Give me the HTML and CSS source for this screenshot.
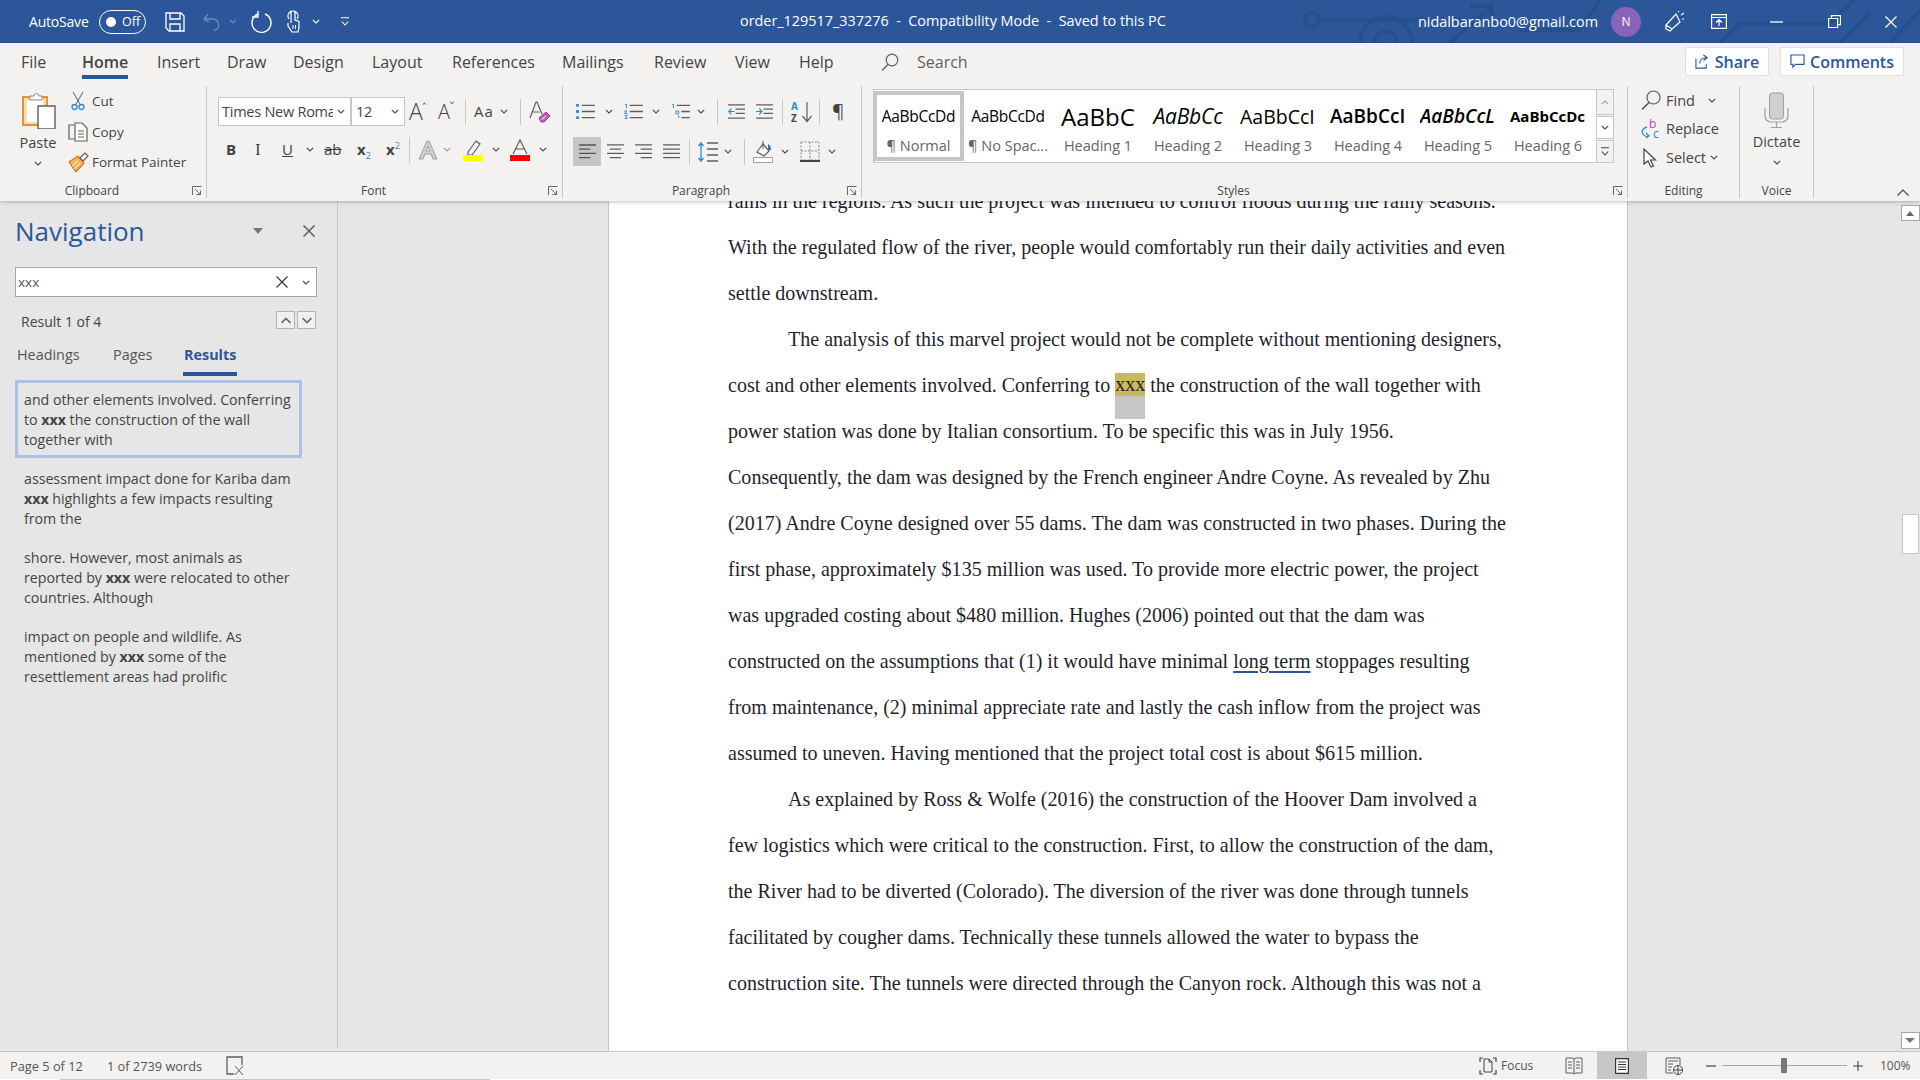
FILE: index.html
```html
<!DOCTYPE html>
<html lang="en">
<head>
<meta charset="utf-8">
<title>order_129517_337276 - Word</title>
<link rel="stylesheet" href="styles.css">
</head>
<body>
<svg class="defs" aria-hidden="true">
  <symbol id="chev" viewBox="0 0 8 5"><path d="M.8.8 4 4l3.2-3.2" fill="none" stroke="currentColor" stroke-width="1.1"/></symbol>
  <symbol id="launch" viewBox="0 0 10 10"><path d="M.5 9V.5H9.500M3 3l5.500 5.500M4.500 8.500H8.500V4.500" fill="none" stroke="#666"/></symbol>
</svg>
<div class="app">
  <header class="titlebar">
    <svg class="circuit" viewBox="0 0 640 43" aria-hidden="true"><g fill="none" stroke="#25508f" stroke-width="4"><circle cx="12" cy="20" r="7"/><path d="M19 20H130M60 43a26 26 0 0 1 52 0M150 43 190 8M170 6h22v22M220 30h60L300 0M420 43l20-20h90l24-23M540 43l30-30M590 43 630 0"/><circle cx="86" cy="42" r="11"/></g></svg>
    <div class="qat">
      <span class="autosave">AutoSave</span>
      <span class="toggle"><i class="dot"></i><span>Off</span></span>
      <svg class="q-save" viewBox="0 0 20 20"><path d="M1 1h15l3 3v15H4l-3-3zM5 1v6h10V1M5 19v-7h10v7" fill="none" stroke="#fff" stroke-width="1.300"/></svg>
      <svg class="q-undo" viewBox="0 0 18 20"><path d="M5 2 1 7l5 3M1.500 7H10a6 6 0 0 1 5 9l-4 3" fill="none" stroke="#6c8cbd" stroke-width="1.300"/></svg>
      <svg class="chev q-c1 dim"><use href="#chev"/></svg>
      <svg class="q-redo" viewBox="0 0 21 22"><path d="M7 3a9.500 9.500 0 1 0 7 0M7 0v6H1" fill="none" stroke="#fff" stroke-width="1.400"/></svg>
      <svg class="q-touch" viewBox="0 0 15 23"><path d="M5 13V3a2 2 0 0 1 4 0v7l4 1.500V18l-1 4H6l-4-6V13M3 9a5 5 0 1 1 8 0" fill="none" stroke="#fff" stroke-width="1.200"/><path d="M7 15v4M9.500 15v4" stroke="#fff"/></svg>
      <svg class="chev q-c2"><use href="#chev"/></svg>
      <svg class="q-more" viewBox="0 0 8 10"><path d="M0 .8h8M.8 4.500 4 8l3.200-3.500" fill="none" stroke="#fff" stroke-width="1.100"/></svg>
    </div>
    <div class="doc-title">order_129517_337276&nbsp; - &nbsp;Compatibility Mode&nbsp; - &nbsp;Saved to this PC</div>
    <div class="account">
      <span class="email">nidalbaranbo0@gmail.com</span>
      <span class="avatar">N</span>
      <svg class="w-feedback" viewBox="0 0 19 22"><path d="M1 14 11 3l4 8-8 7zM1 14l-0 4 4 2 2-2M13 1l1-1M16 4l3-2M17 8h2" fill="none" stroke="#fff" stroke-width="1.200"/></svg>
      <svg class="w-display" viewBox="0 0 16 15"><path d="M.6.6h14.800v13.800H.6zM.6 3.500h14.800M8 12V6M5 8.500 8 5.500l3 3" fill="none" stroke="#fff" stroke-width="1.200"/></svg>
      <svg class="w-min" viewBox="0 0 13 2"><path d="M0 1h13" stroke="#fff" stroke-width="1.300"/></svg>
      <svg class="w-max" viewBox="0 0 13 13"><path d="M.6 3.500h9v9h-9zM3.500 3.500V.6h9v9h-3" fill="none" stroke="#fff" stroke-width="1.200"/></svg>
      <svg class="w-close" viewBox="0 0 12 12"><path d="m.5.5 11 11M11.500.5l-11 11" stroke="#fff" stroke-width="1.200"/></svg>
    </div>
  </header>

  <section class="ribbon">
    <div class="tabrow">
      <nav class="tabs">
        <span>File</span><span class="active">Home</span><span>Insert</span><span>Draw</span><span>Design</span><span>Layout</span><span>References</span><span>Mailings</span><span>Review</span><span>View</span><span>Help</span>
        <svg class="tab-search" viewBox="0 0 18 18"><circle cx="11" cy="7" r="5.800" fill="none" stroke="#605e5c" stroke-width="1.200"/><path d="m7 11.500-6 6" stroke="#605e5c" stroke-width="1.200"/></svg>
        <span class="search-word">Search</span>
      </nav>
      <div class="share-row">
        <button class="pill share"><svg viewBox="0 0 16 16"><path d="M1 5v10h11v-4M5 10c0-4 3-6 7-6M9 1l4 3-4 3" fill="none" stroke="#2b579a" stroke-width="1.200"/></svg>Share</button>
        <button class="pill comments"><svg viewBox="0 0 16 16"><path d="M1 1h14v10H6l-3 3v-3H1z" fill="none" stroke="#2b579a" stroke-width="1.200"/></svg>Comments</button>
      </div>
    </div>
    <div class="groups">
      <div class="grp g-clip">
        <div class="grp-body clip-body">
          <div class="paste">
            <svg class="paste-ico" viewBox="0 0 35 37"><path d="M2 5h24v28H2z" fill="#fbe3c0" stroke="#e8903a" stroke-width="2"/><path d="M5 7.500h18V31H5z" fill="#fff" stroke="#f3c78e"/><path d="M9 7V4h4a2.500 2.500 0 0 1 5 0h3v4H9z" fill="#fff" stroke="#8a8886"/><path d="M17 14h17v23H17z" fill="#fff" stroke="#605e5c" stroke-width="1.400"/></svg>
            <span class="big-label">Paste</span>
            <svg class="chev"><use href="#chev"/></svg>
          </div>
          <div class="clip-list">
            <div class="clip-row"><svg class="ico-cut" viewBox="0 0 14 20"><path d="M2 1l7 12M12 1 5 13" fill="none" stroke="#605e5c"/><circle cx="3.500" cy="16" r="2.500" fill="none" stroke="#2b88d8" stroke-width="1.300"/><circle cx="10.500" cy="16" r="2.500" fill="none" stroke="#2b88d8" stroke-width="1.300"/></svg><span>Cut</span></div>
            <div class="clip-row"><svg class="ico-copy" viewBox="0 0 20 20"><path d="M6 3H1v14h5" fill="none" stroke="#605e5c" stroke-width="1.200"/><path d="M7 1h7l5 5v13H7z" fill="#fff" stroke="#605e5c" stroke-width="1.200"/><path d="M10 9h6M10 12h6M10 15h6" stroke="#605e5c"/></svg><span>Copy</span></div>
            <div class="clip-row"><svg class="ico-fp" viewBox="0 0 21 20"><path d="M1 10 10 4l6 7-8 9z" fill="#f7b45c" stroke="#d8741a" stroke-width="1.200"/><path d="M4 14l6-5M6 17l6-6" stroke="#fff"/><path d="M12 6 17 1l3 3-5 5z" fill="#fff" stroke="#605e5c" stroke-width="1.200"/></svg><span>Format Painter</span></div>
          </div>
        </div>
        <div class="grp-label"><span>Clipboard</span><svg class="launcher"><use href="#launch"/></svg></div>
      </div>

      <div class="grp g-font">
        <div class="grp-body two-rows">
          <div class="row font-r1">
            <div class="combo"><span class="clip-txt">Times New Roma</span><svg class="chev"><use href="#chev"/></svg></div>
            <div class="combo"><span class="clip-txt">12</span><svg class="chev"><use href="#chev"/></svg></div>
            <span class="glyph big-a">A<sup>ˆ</sup></span>
            <span class="glyph mid-a">A<sup class="blue">ˇ</sup></span>
            <i class="sep"></i>
            <span class="glyph aa">Aa</span>
            <svg class="chev"><use href="#chev"/></svg>
            <i class="sep"></i>
            <svg class="ico-clear" viewBox="0 0 21 22"><path d="M1 17 7 1h1l5 12M3.500 11h7" fill="none" stroke="#605e5c" stroke-width="1.200"/><path d="m10 17 7-6 4 4-6 6h-3z" fill="#c45fc4" stroke="#8f3b9c"/><path d="m12.500 19 4-4" stroke="#fff"/></svg>
          </div>
          <div class="row font-r2">
            <b class="fmt">B</b><i class="fmt serif">I</i><u class="fmt">U</u>
            <svg class="chev"><use href="#chev"/></svg>
            <s class="fmt">ab</s>
            <b class="fmt">x<sub class="blue">2</sub></b>
            <b class="fmt">x<sup class="blue">2</sup></b>
            <i class="sep"></i>
            <svg class="ico-effect" viewBox="0 0 20 20"><path d="M1 19 9 1h2l8 18h-4l-2-5H7l-2 5zM8 11h4l-2-5z" fill="#d2d0ce" stroke="#a19f9d"/></svg>
            <svg class="chev dimc"><use href="#chev"/></svg>
            <svg class="ico-hl" viewBox="0 0 20 22"><path d="m5 13 8-11 4 3-8 11H5z" fill="none" stroke="#605e5c" stroke-width="1.200"/><path d="M0 16h20v6H0z" fill="#ffff00"/></svg>
            <svg class="chev"><use href="#chev"/></svg>
            <svg class="ico-fc" viewBox="0 0 20 22"><path d="M3 15 10 1l7 14M5.500 10h9" fill="none" stroke="#605e5c" stroke-width="1.200"/><path d="M0 16h20v6H0z" fill="#ff0000"/></svg>
            <svg class="chev"><use href="#chev"/></svg>
          </div>
        </div>
        <div class="grp-label"><span>Font</span><svg class="launcher"><use href="#launch"/></svg></div>
      </div>

      <div class="grp g-para">
        <div class="grp-body two-rows">
          <div class="row para-r1">
            <svg class="ico-list" viewBox="0 0 20 16"><path d="M0 0h3v3H0zM0 6.500h3v3H0zM0 13h3v3H0z" fill="#2b88d8"/><path d="M6 1.500h14M6 8h14M6 14.500h14" stroke="#605e5c" stroke-width="1.400"/></svg>
            <svg class="chev"><use href="#chev"/></svg>
            <svg class="ico-list" viewBox="0 0 20 16"><path d="M1 .5h1.500v4M0 7.500h3L.5 10h3M.5 12h3l-2 1.500 2 2h-3" fill="none" stroke="#2b88d8"/><path d="M6 1.500h14M6 8h14M6 14.500h14" stroke="#605e5c" stroke-width="1.400"/></svg>
            <svg class="chev"><use href="#chev"/></svg>
            <svg class="ico-list" viewBox="0 0 20 16"><path d="M1 .5h1.500v4M5 7.500h3v3H5zM8 12v3" fill="none" stroke="#2b88d8"/><path d="M6 1.500h14M11 8h9M11 14.500h9" stroke="#605e5c" stroke-width="1.400"/></svg>
            <svg class="chev"><use href="#chev"/></svg>
            <i class="sep"></i>
            <svg class="ico-list" viewBox="0 0 18 16"><path d="M0 1h18M8 5.500h10M8 10h10M0 15h18" stroke="#605e5c" stroke-width="1.400"/><path d="M7 8H1M3.500 5 .8 8l2.700 3" fill="none" stroke="#2b88d8" stroke-width="1.300"/></svg>
            <svg class="ico-list" viewBox="0 0 18 16"><path d="M0 1h18M8 5.500h10M8 10h10M0 15h18" stroke="#605e5c" stroke-width="1.400"/><path d="M0 8h6M3.500 5l2.700 3-2.700 3" fill="none" stroke="#2b88d8" stroke-width="1.300"/></svg>
            <i class="sep"></i>
            <svg class="ico-sort" viewBox="0 0 21 22"><text x="0" y="9" class="sort-a">A</text><text x="0" y="21" class="sort-z">Z</text><path d="M16 1v19M11.500 15l4.500 5.500 4.500-5.500" fill="none" stroke="#605e5c" stroke-width="1.200"/></svg>
            <i class="sep"></i>
            <span class="pilcrow">¶</span>
          </div>
          <div class="row para-r2">
            <span class="al-sel"><svg class="ico-list" viewBox="0 0 20 16"><path d="M1 1h18M1 5.500h12M1 10h18M1 14.500h12" stroke="#555" stroke-width="1.500"/></svg></span>
            <svg class="ico-list" viewBox="0 0 20 16"><path d="M1 1h18M4 5.500h12M1 10h18M4 14.500h12" stroke="#605e5c" stroke-width="1.400"/></svg>
            <svg class="ico-list" viewBox="0 0 20 16"><path d="M1 1h18M7 5.500h12M1 10h18M7 14.500h12" stroke="#605e5c" stroke-width="1.400"/></svg>
            <svg class="ico-list" viewBox="0 0 20 16"><path d="M1 1h18M1 5.500h18M1 10h18M1 14.500h18" stroke="#605e5c" stroke-width="1.400"/></svg>
            <i class="sep"></i>
            <svg class="ico-lsp" viewBox="0 0 20 22"><path d="M3 2v18M.5 5 3 2l2.500 3M.5 17 3 20l2.500-3" fill="none" stroke="#2b88d8" stroke-width="1.300"/><path d="M9 2h11M9 8h11M9 14h11M9 20h11" stroke="#605e5c" stroke-width="1.400"/></svg>
            <svg class="chev"><use href="#chev"/></svg>
            <i class="sep"></i>
            <svg class="ico-shade" viewBox="0 0 20 23"><path d="m4 12 6-8 6 7-5 5z" fill="#fff" stroke="#605e5c" stroke-width="1.200"/><path d="M10 1v8" stroke="#605e5c"/><path d="M15 4c2 1 3 3 3 6h-3z" fill="#2b6fb8"/><path d="M.5 17.500h19v5H.5z" fill="#fff" stroke="#a19f9d"/></svg>
            <svg class="chev"><use href="#chev"/></svg>
            <svg class="ico-bord" viewBox="0 0 20 22"><path d="M1 1h18v18H1zM10 1v18M1 10h18" fill="none" stroke="#8a8886" stroke-dasharray="2 1.500"/><path d="M0 20h20" stroke="#444" stroke-width="2"/></svg>
            <svg class="chev"><use href="#chev"/></svg>
          </div>
        </div>
        <div class="grp-label"><span>Paragraph</span><svg class="launcher"><use href="#launch"/></svg></div>
      </div>

      <div class="grp g-styles">
        <div class="grp-body styles-body">
          <div class="gallery">
            <div class="style selected"><span class="pv pv-n">AaBbCcDd</span><span class="sl">¶ Normal</span></div>
            <div class="style"><span class="pv pv-n">AaBbCcDd</span><span class="sl">¶ No Spac...</span></div>
            <div class="style"><span class="pv pv-1">AaBbC</span><span class="sl">Heading 1</span></div>
            <div class="style"><span class="pv pv-2">AaBbCc</span><span class="sl">Heading 2</span></div>
            <div class="style"><span class="pv pv-3">AaBbCcI</span><span class="sl">Heading 3</span></div>
            <div class="style"><span class="pv pv-4">AaBbCcI</span><span class="sl">Heading 4</span></div>
            <div class="style"><span class="pv pv-5">AaBbCcL</span><span class="sl">Heading 5</span></div>
            <div class="style"><span class="pv pv-6">AaBbCcDc</span><span class="sl">Heading 6</span></div>
          </div>
          <div class="gal-scroll">
            <span class="gs gs-up"><svg class="chev flip dimc"><use href="#chev"/></svg></span>
            <span class="gs gs-dn"><svg class="chev"><use href="#chev"/></svg></span>
            <span class="gs gs-more"><svg class="more-ico" viewBox="0 0 8 10"><path d="M0 .8h8M.8 4.500 4 8l3.200-3.500" fill="none" stroke="#444" stroke-width="1.100"/></svg></span>
          </div>
        </div>
        <div class="grp-label"><span>Styles</span><svg class="launcher"><use href="#launch"/></svg></div>
      </div>

      <div class="grp g-edit">
        <div class="grp-body edit-body">
          <div class="edit-row"><svg class="ed-ico" viewBox="0 0 20 20"><circle cx="12.500" cy="7.500" r="6.500" fill="none" stroke="#605e5c" stroke-width="1.200"/><path d="m8 12.500-7 7" stroke="#444" stroke-width="1.300"/></svg><span>Find</span><svg class="chev"><use href="#chev"/></svg></div>
          <div class="edit-row"><svg class="ed-ico" viewBox="0 0 20 20"><text x="8" y="9" class="rep-b">b</text><text x="12" y="19" class="rep-c">c</text><path d="M6 8C2 9 0 12 2 15s4 3 6 2M5 14l3 3-3 2" fill="none" stroke="#2b88d8" stroke-width="1.300"/></svg><span>Replace</span></div>
          <div class="edit-row"><svg class="ed-ico" viewBox="0 0 20 20"><path d="M3 1v15l4-3 3 6 2.500-1-3-6h5z" fill="#fff" stroke="#444" stroke-width="1.200"/></svg><span class="sel-w">Select</span><svg class="chev"><use href="#chev"/></svg></div>
        </div>
        <div class="grp-label nolaunch"><span>Editing</span></div>
      </div>

      <div class="grp g-voice">
        <div class="grp-body voice-body">
          <svg class="mic" viewBox="0 0 25 36"><rect x="5.500" y="1" width="14" height="26" rx="3" fill="#d2d0ce" stroke="#a19f9d"/><path d="M1 16v8a6 6 0 0 0 6 6h11a6 6 0 0 0 6-6v-8M12.500 30v5M7 35.500h11" fill="none" stroke="#a19f9d" stroke-width="1.200"/></svg>
          <span class="big-label">Dictate</span>
          <svg class="chev"><use href="#chev"/></svg>
        </div>
        <div class="grp-label nolaunch"><span>Voice</span></div>
      </div>
      <svg class="collapse" viewBox="0 0 12 7"><path d="M.5 6.500 6 1l5.500 5.500" fill="none" stroke="#444" stroke-width="1.200"/></svg>
    </div>
  </section>

  <main class="workspace">
    <aside class="nav">
      <div class="nav-head"><h1>Navigation</h1><i class="tri"></i><svg class="nav-x" viewBox="0 0 12 12"><path d="m.5.500 11 11M11.500.500l-11 11" stroke="#605e5c" stroke-width="1.500"/></svg></div>
      <div class="nav-search"><span>xxx</span><svg class="ns-x" viewBox="0 0 12 12"><path d="m.5.500 11 11M11.500.500l-11 11" stroke="#333" stroke-width="1.100"/></svg><svg class="chev"><use href="#chev"/></svg></div>
      <div class="nav-result"><span>Result 1 of 4</span><span class="arrows"><i class="arrow"><svg class="chev flip wide"><use href="#chev"/></svg></i><i class="arrow"><svg class="chev wide"><use href="#chev"/></svg></i></span></div>
      <div class="nav-tabs"><span class="t1">Headings</span><span class="t2">Pages</span><span class="t3 on">Results</span></div>
      <ul class="results">
        <li class="hit-card"><span>and other elements involved. Conferring</span><span>to <b>xxx</b> the construction of the wall</span><span>together with</span></li>
        <li><span>assessment impact done for Kariba dam</span><span><b>xxx</b> highlights a few impacts resulting</span><span>from the</span></li>
        <li><span>shore. However, most animals as</span><span>reported by <b>xxx</b> were relocated to other</span><span>countries. Although</span></li>
        <li><span>impact on people and wildlife. As</span><span>mentioned by <b>xxx</b> some of the</span><span>resettlement areas had prolific</span></li>
      </ul>
    </aside>
    <div class="canvas">
      <article class="page">
        <p>rains in the regions. As such the project was intended to control floods during the rainy seasons.</p>
        <p>With the regulated flow of the river, people would comfortably run their daily activities and even</p>
        <p>settle downstream.</p>
        <p class="ind">The analysis of this marvel project would not be complete without mentioning designers,</p>
        <p>cost and other elements involved. Conferring to <span class="hit">xxx</span> the construction of the wall together with</p>
        <p>power station was done by Italian consortium. To be specific this was in July 1956.</p>
        <p>Consequently, the dam was designed by the French engineer Andre Coyne. As revealed by Zhu</p>
        <p>(2017) Andre Coyne designed over 55 dams. The dam was constructed in two phases. During the</p>
        <p>first phase, approximately $135 million was used. To provide more electric power, the project</p>
        <p>was upgraded costing about $480 million. Hughes (2006) pointed out that the dam was</p>
        <p>constructed on the assumptions that (1) it would have minimal <span class="gram">long term</span> stoppages resulting</p>
        <p>from maintenance, (2) minimal appreciate rate and lastly the cash inflow from the project was</p>
        <p>assumed to uneven. Having mentioned that the project total cost is about $615 million.</p>
        <p class="ind">As explained by Ross &amp; Wolfe (2016) the construction of the Hoover Dam involved a</p>
        <p>few logistics which were critical to the construction. First, to allow the construction of the dam,</p>
        <p>the River had to be diverted (Colorado). The diversion of the river was done through tunnels</p>
        <p>facilitated by cougher dams. Technically these tunnels allowed the water to bypass the</p>
        <p>construction site. The tunnels were directed through the Canyon rock. Although this was not a</p>
      </article>
      <div class="vscroll">
        <span class="sb-btn"><i class="up"></i></span>
        <span class="thumb"></span>
        <span class="sb-btn end"><i class="dn"></i></span>
      </div>
    </div>
  </main>

  <footer class="status">
    <div class="st-left">
      <span>Page 5 of 12</span><span>1 of 2739 words</span>
      <svg class="st-proof" viewBox="0 0 18 20"><path d="M9 1H1v17h7M9 1h7v8" fill="none" stroke="#605e5c" stroke-width="1.300"/><path d="m9 10 8 9M17 10l-8 9" stroke="#605e5c"/></svg>
    </div>
    <div class="st-right">
      <svg class="st-focus" viewBox="0 0 18 18"><path d="M1 5V1h3M14 1h3v4M1 13v4h3M14 17h3v-4" fill="none" stroke="#444" stroke-width="1.200"/><path d="M5 2h5l3 3v10H5zM10 2v3h3" fill="none" stroke="#444"/></svg>
      <span class="st-fword">Focus</span>
      <svg class="st-read" viewBox="0 0 18 18"><path d="M1 1h6l2 1 2-1h6v15h-6l-2 1-2-1H1zM9 2v15M3 5h4M3 8h4M3 11h4M11 5h4M11 8h4M11 11h4" fill="none" stroke="#605e5c"/></svg>
      <span class="st-print"><svg viewBox="0 0 14 16"><path d="M.6.6h12.800v14.800H.6z" fill="#fff" stroke="#333" stroke-width="1.200"/><path d="M3 4h8M3 6.500h8M3 9h8M3 11.500h8" stroke="#333"/></svg></span>
      <svg class="st-web" viewBox="0 0 18 18"><path d="M8 16H1V1h14v7M3 4h10M3 7h5M3 10h4M3 13h3" fill="none" stroke="#605e5c"/><circle cx="13" cy="13" r="4.500" fill="#f3f2f1" stroke="#444"/><path d="M8.500 13h9M13 8.500v9" stroke="#444"/></svg>
      <svg class="st-minus" viewBox="0 0 10 2"><path d="M0 1h10" stroke="#444" stroke-width="1.200"/></svg>
      <span class="slider"><i></i></span>
      <svg class="st-plus" viewBox="0 0 10 10"><path d="M0 5h10M5 0v10" stroke="#444" stroke-width="1.100"/></svg>
      <span class="st-zoom">100%</span>
    </div>
  </footer>
  <div class="strip"><i></i></div>
</div>
</body>
</html>
```

FILE: styles.css
```css
* { box-sizing: border-box; }
html, body { margin: 0; height: 100%; overflow: hidden; }
body { font-family: "Open Sans", "Noto Sans", sans-serif; color: #444; }
.defs { display: none; }
svg { display: block; flex: none; }
i { font-style: normal; }
.app { width: 1920px; height: 1080px; display: flex; flex-direction: column; overflow: hidden; background: #f3f2f1; }

/* title bar */
.titlebar { height: 43px; flex: none; background: #2b579a; color: #fff; display: flex; align-items: center; position: relative; padding-left: 29px; padding-right: 23px; font-size: 14.400px; }
.circuit { position: absolute; left: 1300px; top: 0; width: 640px; height: 43px; }
.qat, .account { display: flex; align-items: center; position: relative; }
.autosave { width: 70px; font-size: 14px; letter-spacing: -.2px; }
.toggle { width: 47px; height: 24px; border: 1px solid #fff; border-radius: 12px; display: flex; align-items: center; gap: 6px; padding-left: 6px; font-size: 12.500px; }
.dot { width: 10px; height: 10px; background: #fff; border-radius: 50%; }
.q-save { width: 20px; height: 20px; margin-left: 19px; }
.q-undo { width: 18px; height: 20px; margin-left: 18px; }
.chev { width: 8px; height: 5px; color: #444; }
.titlebar .chev { color: #fff; }
.titlebar .chev.dim { color: #6c8cbd; }
.q-c1 { margin-left: 8px; }
.q-redo { width: 21px; height: 22px; margin-left: 14px; }
.q-touch { width: 15px; height: 23px; margin-left: 14px; }
.q-c2 { margin-left: 11px; }
.q-more { width: 8px; height: 10px; margin-left: 21px; }
.doc-title { margin: -2px 0 0 391px; white-space: nowrap; position: relative; }
.account { margin-left: auto; }
.email { white-space: nowrap; margin-right: 13px; margin-top: -1px; }
.avatar { width: 30px; height: 30px; border-radius: 50%; background: #8764b8; display: flex; align-items: center; justify-content: center; font-size: 12px; }
.w-feedback { width: 19px; height: 22px; margin-left: 24px; }
.w-display { width: 16px; height: 15px; margin-left: 27px; }
.w-min { width: 13px; height: 2px; margin-left: 43px; }
.w-max { width: 13px; height: 13px; margin-left: 45px; }
.w-close { width: 12px; height: 12px; margin-left: 44px; }

/* ribbon */
.ribbon { height: 158px; flex: none; background: #f3f2f1; display: flex; flex-direction: column; box-shadow: 0 1px 4px rgba(0,0,0,.25); position: relative; z-index: 2; }
.tabrow { height: 43px; flex: none; display: flex; padding-left: 21px; padding-right: 16px; }
.tabs { display: grid; grid-template-columns: 61px 75px 70px 66px 79px 80px 110px 92px 81px 64px 82px 36px 60px; align-items: start; font-size: 16px; color: #444; }
.tabs span { white-space: nowrap; margin-top: 8px; line-height: 22px; }
.tabs .active { font-weight: 600; justify-self: start; height: 28px; border-bottom: 4px solid #2b579a; }
.tab-search { width: 18px; height: 18px; margin-top: 10px; }
.tabs .search-word { color: #605e5c; }
.share-row { margin-left: auto; display: flex; gap: 11px; padding-top: 4px; }
.pill { height: 29px; background: #fff; border: 1px solid #e1dfdd; border-radius: 2px; color: #2b579a; font: 600 16px "Open Sans", sans-serif; display: flex; align-items: center; justify-content: center; gap: 5px; padding: 0; }
.pill svg { width: 15px; height: 15px; }
.share { width: 84px; }
.comments { width: 124px; }
.groups { flex: 1; display: flex; min-height: 0; }
.grp { display: flex; flex-direction: column; height: 112px; border-right: 1px solid #c8c6c4; }
.grp-body { height: 98px; flex: none; }
.grp-label { height: 14px; flex: none; display: flex; align-items: center; font-size: 12px; line-height: 14px; color: #444; }
.grp-label span { flex: 1; text-align: center; }
.launcher { width: 10px; height: 10px; margin: 0 4px 0 8px; }
.g-clip { width: 207px; }
.g-font { width: 356px; }
.g-para { width: 299px; }
.g-styles { width: 766px; }
.g-edit { width: 112px; }
.g-voice { width: 74px; }
.clip-body { display: flex; font-size: 13.500px; }
.paste { width: 60px; margin-left: 8px; display: flex; flex-direction: column; align-items: center; padding-top: 6px; }
.paste-ico { width: 35px; height: 37px; }
.big-label { font-size: 14.500px; line-height: 20px; margin-top: 4px; }
.paste .chev, .voice-body .chev { margin-top: 8px; }
.clip-list { display: grid; grid-auto-rows: 30.500px; align-content: start; }
.clip-row { display: grid; grid-template-columns: 24px auto; align-items: center; white-space: nowrap; }
.ico-cut { width: 14px; height: 20px; margin-left: 3px; }
.ico-copy { width: 20px; height: 20px; }
.ico-fp { width: 21px; height: 20px; }
.two-rows { padding-top: 11px; display: flex; flex-direction: column; gap: 9px; }
.row { display: grid; height: 29px; align-items: center; justify-items: start; }
.sep { width: 1px; height: 26px; background: #c8c6c4; }
.font-r1 { padding-left: 11px; grid-template-columns: 133px 58px 29px 27px 9px 26px 20px 9px 20px; }
.font-r2 { padding-left: 19px; grid-template-columns: 29px 27px 24px 18px 33px 29px 23px 9px 25px 20px 29px 18px 29px 8px; }
.combo { height: 29px; background: #fff; border: 1px solid #c8c6c4; display: flex; align-items: center; justify-content: space-between; padding: 0 5px 0 3px; font-size: 14.500px; width: 100%; }
.combo:nth-child(2) { width: 54px; padding-left: 4px; }
.clip-txt { width: 111px; overflow: hidden; white-space: nowrap; letter-spacing: -.25px; }
.combo:nth-child(2) .clip-txt { width: auto; }
.glyph { line-height: 1; color: #444; white-space: nowrap; }
.glyph sup { font-size: 14px; color: #2b579a; vertical-align: 6px; line-height: 0; margin-left: -1px; }
sup.blue { color: #2b88d8; }
.big-a { font-size: 23px; font-weight: 300; }
.mid-a { font-size: 20px; font-weight: 300; }
.aa { font-size: 15px; letter-spacing: 1px; }
.ico-clear { width: 21px; height: 22px; }
.fmt { font-size: 15px; color: #444; line-height: 1; }
.fmt.serif { font-family: "Liberation Serif", serif; font-size: 17px; }
.fmt sub, .fmt sup { font-size: 9px; line-height: 0; }
.blue { color: #2b88d8; font-weight: 400; }
.ico-effect { width: 20px; height: 20px; }
.dimc { color: #a19f9d; }
.ico-hl, .ico-fc { width: 20px; height: 22px; }
.para-r1 { padding-left: 13px; grid-template-columns: 29px 19px 28px 19px 26px 20px 10px 28px 27px 9px 28px 13px 14px; }
.para-r2 { padding-left: 10px; grid-template-columns: 33px 28px 28px 27px 9px 26px 20px 9px 28px 19px 28px 9px; height: 29px; margin-top: 2px; }
.ico-list { width: 19px; height: 15px; }
.ico-sort { width: 21px; height: 22px; }
.sort-a { font: 700 10px "Open Sans", sans-serif; fill: #2b88d8; }
.sort-z { font: 700 10px "Open Sans", sans-serif; fill: #444; }
.pilcrow { font-size: 19px; line-height: 1; color: #444; }
.al-sel { width: 28px; height: 29px; background: #c8c6c4; display: flex; align-items: center; justify-content: center; }
.ico-lsp { width: 20px; height: 22px; }
.ico-shade { width: 20px; height: 23px; }
.ico-bord { width: 20px; height: 22px; }
.styles-body { padding: 3px 0 0 11px; display: flex; }
.gallery { width: 723px; height: 74px; background: #fff; border: 1px solid #c8c6c4; border-right: 0; display: flex; align-items: center; }
.style { width: 90px; height: 70px; flex: none; display: flex; flex-direction: column; align-items: center; padding-top: 5px; }
.selected { width: 91px; border: 4px solid #c6c6c6; margin-left: -1px; margin-right: -1px; padding-top: 1px; }
.pv { height: 40px; width: 76px; display: flex; align-items: center; justify-content: center; overflow: hidden; white-space: nowrap; color: #000; flex: none; }
.pv-n { font-size: 15.500px; letter-spacing: -.3px; }
.pv-1 { font-size: 24px; }
.pv-2 { font-size: 21px; font-style: italic; font-weight: 500; letter-spacing: -.2px; }
.pv-3 { font-size: 19.500px; justify-content: flex-start; }
.pv-4 { font-size: 19px; font-weight: 600; justify-content: flex-start; }
.pv-5 { font-size: 19px; font-style: italic; font-weight: 600; justify-content: flex-start; }
.pv-6 { font-size: 15px; font-weight: 700; justify-content: flex-start; }
.sl { font-size: 14.500px; line-height: 20px; color: #666; white-space: nowrap; }
.gal-scroll { width: 18px; height: 74px; display: flex; flex-direction: column; gap: 1px; }
.gs { border: 1px solid #c8c6c4; background: #fff; display: flex; align-items: center; justify-content: center; flex: none; }
.gs-up { height: 26px; background: #f3f2f1; }
.gs-dn { height: 23px; }
.gs-more { height: 23px; background: #f3f2f1; }
.flip { transform: scaleY(-1); }
.more-ico { width: 8px; height: 10px; }
.edit-body { padding: 0 0 0 13px; font-size: 14.500px; display: flex; flex-direction: column; }
.edit-row { height: 29px; display: flex; align-items: center; white-space: nowrap; }
.edit-row:first-child { height: 28px; }
.ed-ico { width: 20px; height: 20px; margin-right: 5px; }
.edit-row .chev { margin-left: 13px; }
.edit-row .sel-w + .chev { margin-left: 4px; }
.rep-b { font: 12px "Open Sans", sans-serif; fill: #b146c2; }
.rep-c { font: 12px "Open Sans", sans-serif; fill: #2b88d8; }
.voice-body { display: flex; flex-direction: column; align-items: center; padding-top: 6px; }
.mic { width: 25px; height: 36px; }
.nolaunch span { flex: 1; }
.collapse { width: 12px; height: 7px; margin: 103px 0 0 83px; }

/* workspace */
.workspace { flex: 1; min-height: 0; display: flex; background: #e6e6e6; }
.nav { width: 338px; flex: none; border-right: 1px solid #c8c8c8; margin-bottom: 3px; }
.nav-head { height: 60px; display: flex; align-items: center; padding-left: 15px; }
.nav-head h1 { margin: 0; font-size: 26px; font-weight: 400; color: #2b579a; width: 238px; }
.tri { width: 0; height: 0; border-left: 5.500px solid transparent; border-right: 5.500px solid transparent; border-top: 6px solid #777; }
.nav-x { width: 12px; height: 12px; margin-left: 40px; }
.nav-search { width: 302px; height: 30px; margin: 6px 0 0 15px; background: #fff; border: 1px solid #a6a6a6; display: flex; align-items: center; padding: 0 6px 0 2px; font-size: 13.500px; color: #555; }
.nav-search span { flex: 1; }
.ns-x { width: 12px; height: 12px; margin-right: 14px; }
.nav-result { height: 18px; margin-top: 14px; padding: 0 21px 0 21px; display: flex; justify-content: space-between; align-items: center; font-size: 14px; color: #444; }
.nav-result > span:first-child { margin-top: 2px; }
.arrows { display: flex; gap: 2px; }
.arrow { width: 19px; height: 18px; border: 1px solid #b3b3b3; background: #f0f0f0; display: flex; align-items: center; justify-content: center; }
.chev.wide { width: 12px; height: 7px; color: #666; }
.nav-tabs { height: 39px; margin-top: 8px; padding-left: 15px; display: grid; grid-template-columns: 98px 70px auto; font-size: 14.400px; color: #555; justify-items: start; justify-content: start; }
.nav-tabs span { height: 39px; padding-top: 8px; line-height: 20px; border-bottom: 4px solid transparent; }
.t1 { margin-left: 2px; }
.nav-tabs .on { color: #2b579a; font-weight: 700; padding: 8px 1px 0; border-bottom-color: #2b579a; }
.results { list-style: none; margin: 4px 0 0 15px; padding: 0; width: 287px; font-size: 14.200px; line-height: 20px; color: #444; }
.results li { height: 60px; margin: 0 0 19px 9px; white-space: nowrap; }
.results li span { display: block; }
.results .hit-card { height: 78px; margin: 0 0 11px; padding: 7px 0 0 6px; border: 3px solid #a9c2e6; }

/* document */
.canvas { flex: 1; min-width: 0; display: flex; position: relative; padding-left: 270px; overflow: hidden; }
.page { width: 1020px; height: 100%; background: #fff; border-left: 1px solid #c6c6c6; border-right: 1px solid #c6c6c6; padding-left: 119px; font-family: "Liberation Serif", serif; font-size: 20.050px; color: #1f1f2e; overflow: hidden; }
.page p { margin: 0; height: 46px; line-height: 46px; white-space: nowrap; }
.page p:first-child { margin-top: -23px; }
.page .ind { padding-left: 60px; }
.hit { display: inline-block; vertical-align: top; margin-top: 11px; height: 46px; line-height: 23px; background: linear-gradient(#c8b95f 50%, #c6c6c6 50%); }
.gram { text-decoration: underline; text-decoration-color: #2b579a; text-underline-offset: 3px; }
.vscroll { margin-left: auto; width: 20px; display: flex; flex-direction: column; align-items: center; background: #e6e6e6; padding: 4px 0 2px; }
.sb-btn { width: 19px; height: 16px; background: #fff; border: 1px solid #a6a6a6; display: flex; align-items: center; justify-content: center; flex: none; }
.sb-btn.end { margin-top: auto; height: 17px; }
.up { border-left: 4px solid transparent; border-right: 4px solid transparent; border-bottom: 5px solid #666; }
.dn { border-left: 5px solid transparent; border-right: 5px solid transparent; border-top: 5px solid #777; }
.thumb { width: 17px; height: 40px; margin-top: 293px; background: #fff; border: 1px solid #c6c6c6; flex: none; }

/* status */
.status { height: 28px; flex: none; border-top: 1px solid #c6c6c6; background: #f3f2f1; display: flex; justify-content: space-between; font-size: 12.800px; color: #555; }
.st-left { display: flex; align-items: center; padding-left: 10px; gap: 24px; }
.st-proof { width: 18px; height: 20px; }
.st-right { display: grid; grid-template-columns: 22px 64px 34px 66px 41px 16px 131px 27px 30px; align-items: center; justify-items: start; padding-right: 10px; }
.st-focus { width: 18px; height: 18px; }
.st-read { width: 18px; height: 18px; }
.st-print { width: 50px; height: 27px; background: #c8c6c4; margin-left: -2px; display: flex; align-items: center; justify-content: center; }
.st-print svg { width: 14px; height: 16px; }
.st-web { width: 18px; height: 18px; }
.st-minus { width: 10px; height: 2px; }
.slider { width: 125px; height: 1px; background: #a6a6a6; position: relative; }
.slider i { position: absolute; left: 59px; top: -7px; width: 6px; height: 15px; background: #777; }
.st-plus { width: 10px; height: 10px; }
.st-fword, .st-zoom { font-size: 12px; }
.strip { height: 1px; flex: none; background: #fff; }
.strip i { display: block; width: 430px; height: 1px; margin-left: 60px; background: #c6c6c6; }
```
